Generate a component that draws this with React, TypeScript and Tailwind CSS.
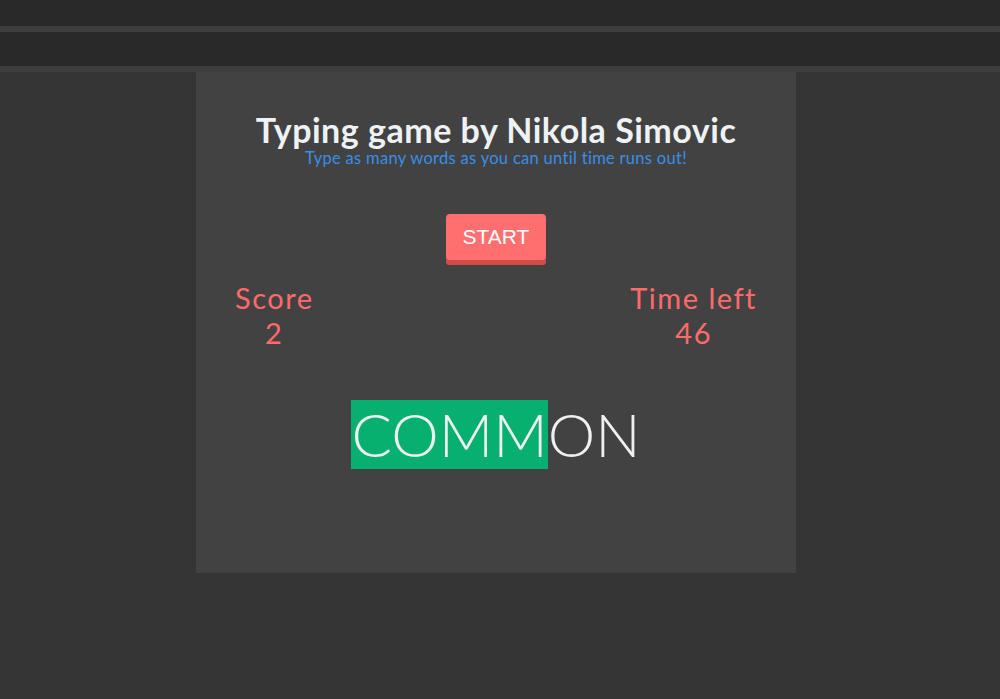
export default function App() {
  const word = "COMMON"
  const typed = 4

  return (
    <div className="min-h-[699px] bg-[#353535] font-['Lato','Open_Sans',sans-serif]">
      <div className="h-[26px] bg-[#292929]" />
      <div className="h-[6px] bg-[#3d3d3d]" />
      <div className="h-[34px] bg-[#292929]" />
      <div className="h-[6px] bg-[#3d3d3d]" />

      <div className="ml-[196px] flex h-[501px] w-[600px] flex-col items-center bg-[#424242] pt-[39px]">
        <h1 className="text-[34px] font-bold leading-[38px] tracking-[0.5px] text-[#eef2f5]">Typing game by Nikola Simovic</h1>
        <p className="text-[16.5px] leading-[18px] tracking-[0.3px] text-[#3a8ee6]">Type as many words as you can until time runs out!</p>

        <button className="mt-[47px] h-[51px] w-[100px] rounded-[4px] bg-[#ff6f6f] pb-[5px] font-['Liberation_Sans',Arial,sans-serif] text-[21px] text-white shadow-[inset_0_-5px_0_#d14b4b]">
          START
        </button>

        <div className="mt-[15px] flex w-full justify-between px-[39px] text-[29px] leading-[35px] tracking-[1.5px] text-[#ff6b6b]">
          <div className="flex flex-col items-center">
            <span>Score</span>
            <span>2</span>
          </div>
          <div className="flex flex-col items-center">
            <span>Time left</span>
            <span>46</span>
          </div>
        </div>

        <div className="mt-[50px] flex text-[60px] font-light leading-[69px] text-[#eef0f2]">
          <span className="bg-[#08b070]">{word.slice(0, typed)}</span>
          <span>{word.slice(typed)}</span>
        </div>
      </div>
    </div>
  )
}
